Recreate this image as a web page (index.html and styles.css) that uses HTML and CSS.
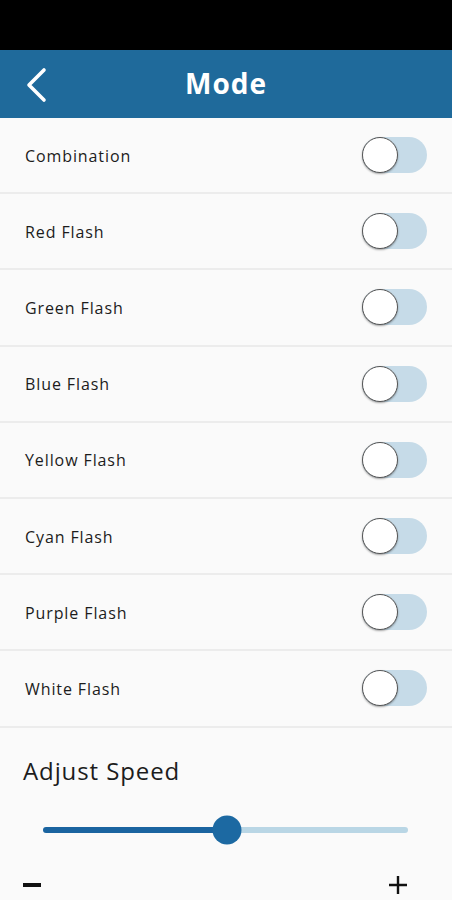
FILE: index.html
```html
<!DOCTYPE html>
<html>
<head>
<meta charset="utf-8">
<link rel="stylesheet" href="styles.css">
</head>
<body>
<div class="status"></div>
<header class="bar">
  <svg class="back" width="24" height="36" viewBox="0 0 24 36"><path d="M20 3 L5 18 L20 33" fill="none" stroke="#fff" stroke-width="3.6" stroke-linecap="round" stroke-linejoin="round"/></svg>
  <h1>Mode</h1>
</header>
<ul class="list">
  <li class="row"><span>Combination</span><span class="toggle"><span class="knob"></span></span></li>
  <li class="row"><span>Red Flash</span><span class="toggle"><span class="knob"></span></span></li>
  <li class="row"><span>Green Flash</span><span class="toggle"><span class="knob"></span></span></li>
  <li class="row"><span>Blue Flash</span><span class="toggle"><span class="knob"></span></span></li>
  <li class="row"><span>Yellow Flash</span><span class="toggle"><span class="knob"></span></span></li>
  <li class="row"><span>Cyan Flash</span><span class="toggle"><span class="knob"></span></span></li>
  <li class="row"><span>Purple Flash</span><span class="toggle"><span class="knob"></span></span></li>
  <li class="row"><span>White Flash</span><span class="toggle"><span class="knob"></span></span></li>
</ul>
<section class="speed">
  <h2>Adjust Speed</h2>
  <div class="slider">
    <div class="fill" style="width:50.4%"></div>
    <div class="rest"></div>
    <div class="thumb" style="left:50.4%"></div>
  </div>
  <div class="signs">
    <span class="minus"></span>
    <svg class="plus" width="20" height="20" viewBox="0 0 20 20"><path d="M10 1 V19 M1 10 H19" stroke="#111" stroke-width="2.4"/></svg>
  </div>
</section>
</body>
</html>
```
FILE: styles.css
```css
* { box-sizing: border-box; }
html, body { margin: 0; padding: 0; }
body {
  width: 452px;
  height: 900px;
  overflow: hidden;
  background: #fafafa;
  font-family: "Open Sans", "Noto Sans", sans-serif;
  color: #1c1c1c;
}
.status { height: 50px; background: #000; }
.bar {
  height: 68px;
  background: #1f6a9b;
  position: relative;
  display: flex;
  align-items: center;
  justify-content: center;
}
.back { position: absolute; left: 24px; top: 17px; }
.bar h1 {
  margin: 0;
  color: #fff;
  font-size: 28px;
  font-weight: 700;
  letter-spacing: 1px;
  padding-bottom: 2px;
}
.list { list-style: none; margin: 0; padding: 0; }
.row {
  height: 76.2px;
  display: flex;
  align-items: center;
  justify-content: space-between;
  padding: 0 25px 0 25px;
  border-bottom: 2px solid #ececec;
  font-size: 16px;
  letter-spacing: 0.9px;
}
.row span:first-child { padding-top: 1px; }
.toggle {
  width: 65px;
  height: 36px;
  border-radius: 18px;
  background: #c6dbe8;
  position: relative;
}
.knob {
  position: absolute;
  left: 0;
  top: 0;
  width: 36px;
  height: 36px;
  border-radius: 50%;
  background: #fff;
  border: 1.5px solid #555;
  box-shadow: 0 1px 2px rgba(0,0,0,0.35);
}
.speed { padding: 0 23px; }
.speed h2 {
  margin: 0;
  padding-top: 27px;
  font-size: 24px;
  font-weight: 400;
  letter-spacing: 0.9px;
  line-height: 32px;
}
.slider {
  position: relative;
  margin: 40px 21px 0 20px;
  height: 6px;
  display: flex;
}
.fill { height: 6px; background: #1a64a0; border-radius: 3px 0 0 3px; }
.rest { flex: 1; height: 6px; background: #b9d6e5; border-radius: 0 3px 3px 0; }
.thumb {
  position: absolute;
  top: 50%;
  width: 29px;
  height: 29px;
  border-radius: 50%;
  background: #1c69a2;
  transform: translate(-50%, -50%);
}
.signs {
  display: flex;
  justify-content: space-between;
  align-items: center;
  margin-top: 42px;
  padding-right: 21px;
}
.minus { width: 18px; height: 4px; background: #111; }
.plus { margin-top: 0; }
```
